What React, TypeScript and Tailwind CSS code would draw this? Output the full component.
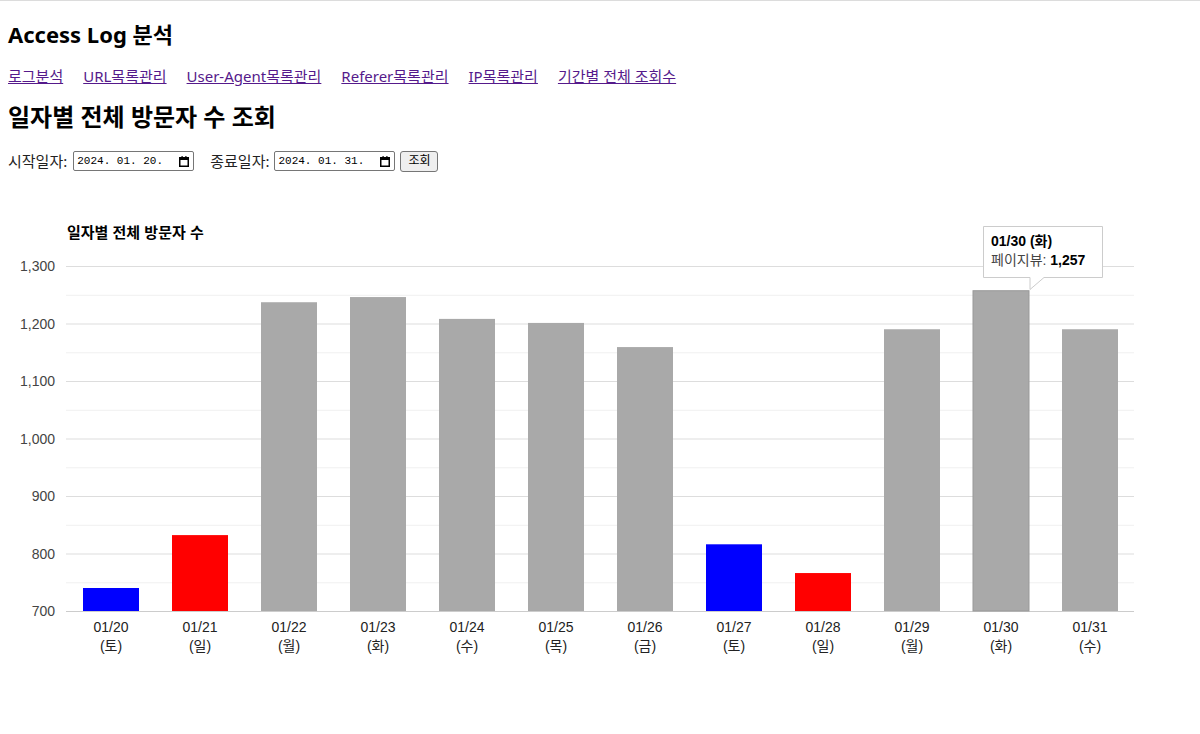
import React from 'react';

type Day = { date: string; dow: string; value: number; color: string };

const days: Day[] = [
  { date: '01/20', dow: '토', value: 740, color: '#0000ff' },
  { date: '01/21', dow: '일', value: 832, color: '#ff0000' },
  { date: '01/22', dow: '월', value: 1237, color: '#a9a9a9' },
  { date: '01/23', dow: '화', value: 1246, color: '#a9a9a9' },
  { date: '01/24', dow: '수', value: 1208, color: '#a9a9a9' },
  { date: '01/25', dow: '목', value: 1201, color: '#a9a9a9' },
  { date: '01/26', dow: '금', value: 1159, color: '#a9a9a9' },
  { date: '01/27', dow: '토', value: 816, color: '#0000ff' },
  { date: '01/28', dow: '일', value: 766, color: '#ff0000' },
  { date: '01/29', dow: '월', value: 1190, color: '#a9a9a9' },
  { date: '01/30', dow: '화', value: 1257, color: '#a9a9a9' },
  { date: '01/31', dow: '수', value: 1190, color: '#a9a9a9' },
];

const links = ['로그분석', 'URL목록관리', 'User-Agent목록관리', 'Referer목록관리', 'IP목록관리', '기간별 전체 조회수'];

// chart geometry, in page pixels (the svg viewBox is offset to match)
const LEFT = 66;
const RIGHT = 1134;
const Y700 = 611;
const PX_PER = 0.575;
const yOf = (v: number) => Y700 - (v - 700) * PX_PER;
const ticks = [700, 800, 900, 1000, 1100, 1200, 1300];
const minors = [750, 850, 950, 1050, 1150, 1250];

function DateBox({ value }: { value: string }) {
  return (
    <span className="inline-flex h-[20px] w-[121px] items-center justify-between rounded-[2px] border border-[#767676] bg-white pl-[3px] pr-[4px]">
      <span className="font-['Liberation_Mono','DejaVu_Sans_Mono',monospace] text-[11px] leading-none text-black">{value}</span>
      <svg width="10" height="11" viewBox="0 0 10 11">
        <rect x="0.75" y="1.75" width="8.5" height="8.5" fill="none" stroke="#000" strokeWidth="1.5" />
        <rect x="0.5" y="1.5" width="9" height="2.5" fill="#000" />
        <rect x="2.5" y="0" width="1.2" height="2" fill="#000" />
        <rect x="6.3" y="0" width="1.2" height="2" fill="#000" />
      </svg>
    </span>
  );
}

function Chart() {
  return (
    <svg width="1192" height="490" viewBox="8 190 1192 490" className="block font-['Liberation_Sans','Noto_Sans_CJK_KR',sans-serif]">
      <text x="67" y="238" fontSize="15" fontWeight="bold" fill="#000">
        일자별 전체 방문자 수
      </text>
      {minors.map((v) => (
        <line key={v} x1={LEFT} x2={RIGHT} y1={yOf(v) + 0.5} y2={yOf(v) + 0.5} stroke="#f0f0f0" strokeWidth="1" />
      ))}
      {ticks.map((v) => (
        <g key={v}>
          <line x1={LEFT} x2={RIGHT} y1={yOf(v) + 0.5} y2={yOf(v) + 0.5} stroke={v === 700 ? '#cccccc' : '#dddddd'} strokeWidth="1" />
          <text x="55" y={yOf(v) + 5} fontSize="14" fill="#444" textAnchor="end">
            {v.toLocaleString('en-US')}
          </text>
        </g>
      ))}
      {days.map((d, i) => {
        const x = 83 + 89 * i;
        const top = yOf(d.value);
        const hl = d.date === '01/30';
        return (
          <g key={d.date}>
            <rect x={x} y={top} width="56" height={Y700 - top} fill={d.color} stroke={hl ? '#999' : 'none'} strokeWidth={hl ? 1 : 0} />
            <text x={x + 28} y="632" fontSize="14" fill="#222" textAnchor="middle">
              {d.date}
            </text>
            <text x={x + 28} y="651" fontSize="14" fill="#222" textAnchor="middle">
              ({d.dow})
            </text>
          </g>
        );
      })}
      {/* hover tooltip over 01/30 */}
      <g>
        <path d="M983.5 226.5 H1102.5 V277.5 H1044 L1030 289.5 L1030 277.5 H983.5 Z" fill="#ffffff" stroke="#cccccc" strokeWidth="1" />
        <text x="991" y="246" fontSize="14" fontWeight="bold" fill="#000">
          01/30 (화)
        </text>
        <text x="991" y="265" fontSize="14" fill="#444">
          페이지뷰: <tspan fontWeight="bold" fill="#000">1,257</tspan>
        </text>
      </g>
    </svg>
  );
}

export default function App() {
  return (
    <div className="min-h-[734px] border-t border-[#dcdcdc] bg-white px-2 pt-[18px] font-['Noto_Sans','Noto_Sans_CJK_KR',sans-serif] text-black">
      <h3 className="text-[22px] font-bold leading-[30px]">Access Log 분석</h3>
      <nav className="mt-[15px] flex gap-[20px] text-[15px] leading-[24px]">
        {links.map((l) => (
          <a key={l} href="#" className="text-[#551a8b] underline">
            {l}
          </a>
        ))}
      </nav>
      <h2 className="mt-[14px] text-[24px] font-bold leading-[30px]">일자별 전체 방문자 수 조회</h2>
      <div className="mt-[19px] flex h-[20px] items-center text-[15px] text-[#222]">
        <span className="mr-[6px]">시작일자:</span>
        <DateBox value="2024. 01. 20." />
        <span className="ml-[16px] mr-[5px]">종료일자:</span>
        <DateBox value="2024. 01. 31." />
        <button className="ml-[5px] h-[21px] w-[38px] rounded-[3px] border border-[#767676] bg-[#efefef] text-[12px] leading-none text-black">
          조회
        </button>
      </div>
      <div className="mt-[19px]">
        <Chart />
      </div>
    </div>
  );
}
